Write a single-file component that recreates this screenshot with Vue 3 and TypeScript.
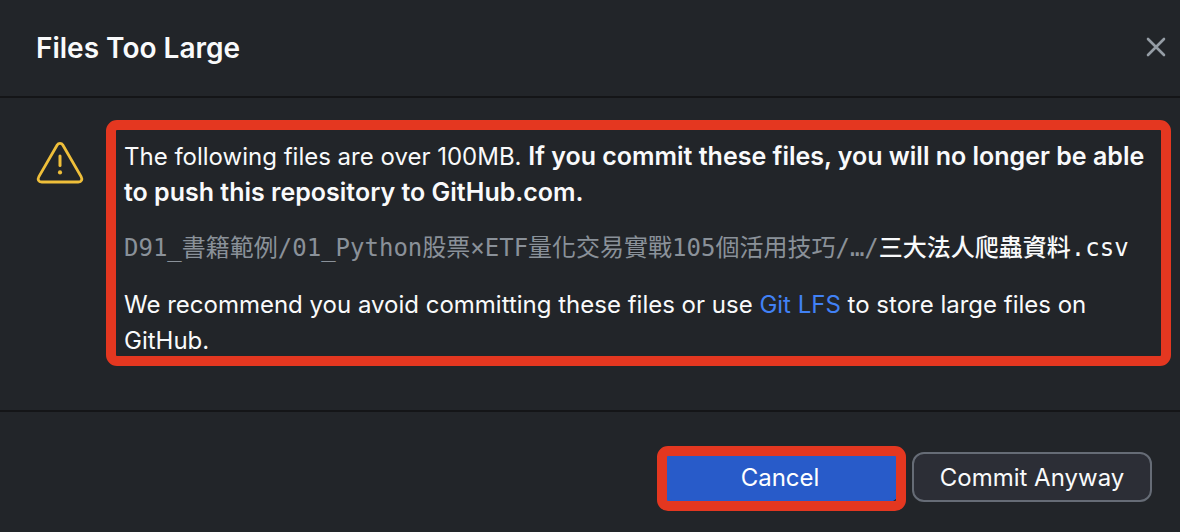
<script setup lang="ts">
import { ref } from 'vue'

interface LargeFile {
  directory: string
  name: string
}

const open = ref(true)
const files: LargeFile[] = [
  {
    directory: 'D91_書籍範例/01_Python股票×ETF量化交易實戰105個活用技巧/…/',
    name: '三大法人爬蟲資料.csv',
  },
]

function close(): void {
  open.value = false
}
</script>

<template>
  <section v-if="open" class="dialog" role="alertdialog" aria-labelledby="dialog-title">
    <header class="header">
      <h1 id="dialog-title" class="title">Files Too Large</h1>
      <button class="close" type="button" aria-label="Close" @click="close">
        <svg width="20" height="20" viewBox="0 0 20 20" fill="none" stroke="currentColor" stroke-width="2.6" stroke-linecap="round">
          <path d="M2 2 18 18M18 2 2 18" />
        </svg>
      </button>
    </header>

    <div class="body">
      <svg class="warning" width="48" height="44" viewBox="0 0 48 44" fill="none" stroke="currentColor" stroke-width="2.8" stroke-linecap="round" stroke-linejoin="round">
        <path d="M21.2 4 2.9 35.6C1.3 38.5 2.5 41 5.7 41H42.3C45.5 41 46.7 38.5 45.1 35.6L26.8 4C25.5 1.8 22.5 1.8 21.2 4Z" />
        <path d="M24 15V24.6" stroke-width="3" />
        <circle cx="24" cy="31.4" r="2.1" fill="currentColor" stroke="none" />
      </svg>
      <div class="message">
        <p>
          <span>The following files are over 100MB. </span>
          <strong>If you commit these files, you will no longer be able to push this repository to GitHub.com.</strong>
        </p>
        <ul class="files">
          <li v-for="file in files" :key="file.name">
            <span class="directory">{{ file.directory }}</span><span class="name">{{ file.name }}</span>
          </li>
        </ul>
        <p>
          We recommend you avoid committing these files or use
          <a href="#git-lfs">Git LFS</a> to store large files on GitHub.
        </p>
      </div>
    </div>

    <footer class="footer">
      <div class="marked">
        <button class="button primary" type="button" @click="close">Cancel</button>
      </div>
      <button class="button" type="button" @click="close">Commit Anyway</button>
    </footer>
  </section>
</template>

<style>
body {
  background: #222529;
}
</style>

<style scoped>
.dialog {
  display: flex;
  flex-direction: column;
  min-height: 100vh;
  box-sizing: border-box;
  background: #222529;
  color: #f9fafb;
  font-family: Inter, "Noto Sans CJK TC", sans-serif;
  font-size: 24px;
  line-height: 36px;
}

.header {
  display: flex;
  align-items: center;
  justify-content: space-between;
  padding: 30px 14px 30px 36px;
  border-bottom: 2px solid #141517;
}

.title {
  margin: 0;
  font-size: 28px;
  font-weight: 600;
  line-height: 36px;
}

.close {
  display: flex;
  padding: 0 0 2px;
  border: 0;
  background: none;
  color: #959da5;
}

.body {
  display: flex;
  flex: 1;
  align-items: flex-start;
  gap: 40px;
  padding: 41px 28px 51px 36px;
}

.warning {
  flex: none;
  margin-top: 2px;
  color: #efbf3a;
}

.message {
  position: relative;
  flex: 1;
  min-width: 0;
}

.message::after,
.marked::after {
  content: "";
  position: absolute;
  border: 10px solid #e43720;
  border-radius: 11px;
  pointer-events: none;
}

.message::after {
  inset: -19px -19px -7px -18px;
}

.message p {
  margin: 0;
}

.message strong {
  font-size: 25px;
  font-weight: 600;
  line-height: 30px;
}

.message a {
  color: #4181f5;
  text-decoration: none;
}

.files {
  margin: 19px 0 21px;
  padding: 0;
  list-style: none;
  font-family: "DejaVu Sans Mono", "Noto Sans CJK TC", monospace;
}

.directory {
  color: #8a9199;
}

.name {
  font-weight: 500;
}

.footer {
  display: flex;
  justify-content: flex-end;
  gap: 12px;
  padding: 40px 28px 30px;
  border-top: 2px solid #141517;
}

.marked {
  position: relative;
}

.marked::after {
  inset: -6px -6px -9px -3px;
}

.button {
  width: 240px;
  height: 50px;
  padding: 2px 0 0;
  border: 2px solid #666c76;
  border-radius: 12px;
  background: #2c2e36;
  color: #f9fafb;
  font: inherit;
}

.primary {
  border-color: #285bc9;
  background: #285bc9;
  color: #ffffff;
}
</style>
